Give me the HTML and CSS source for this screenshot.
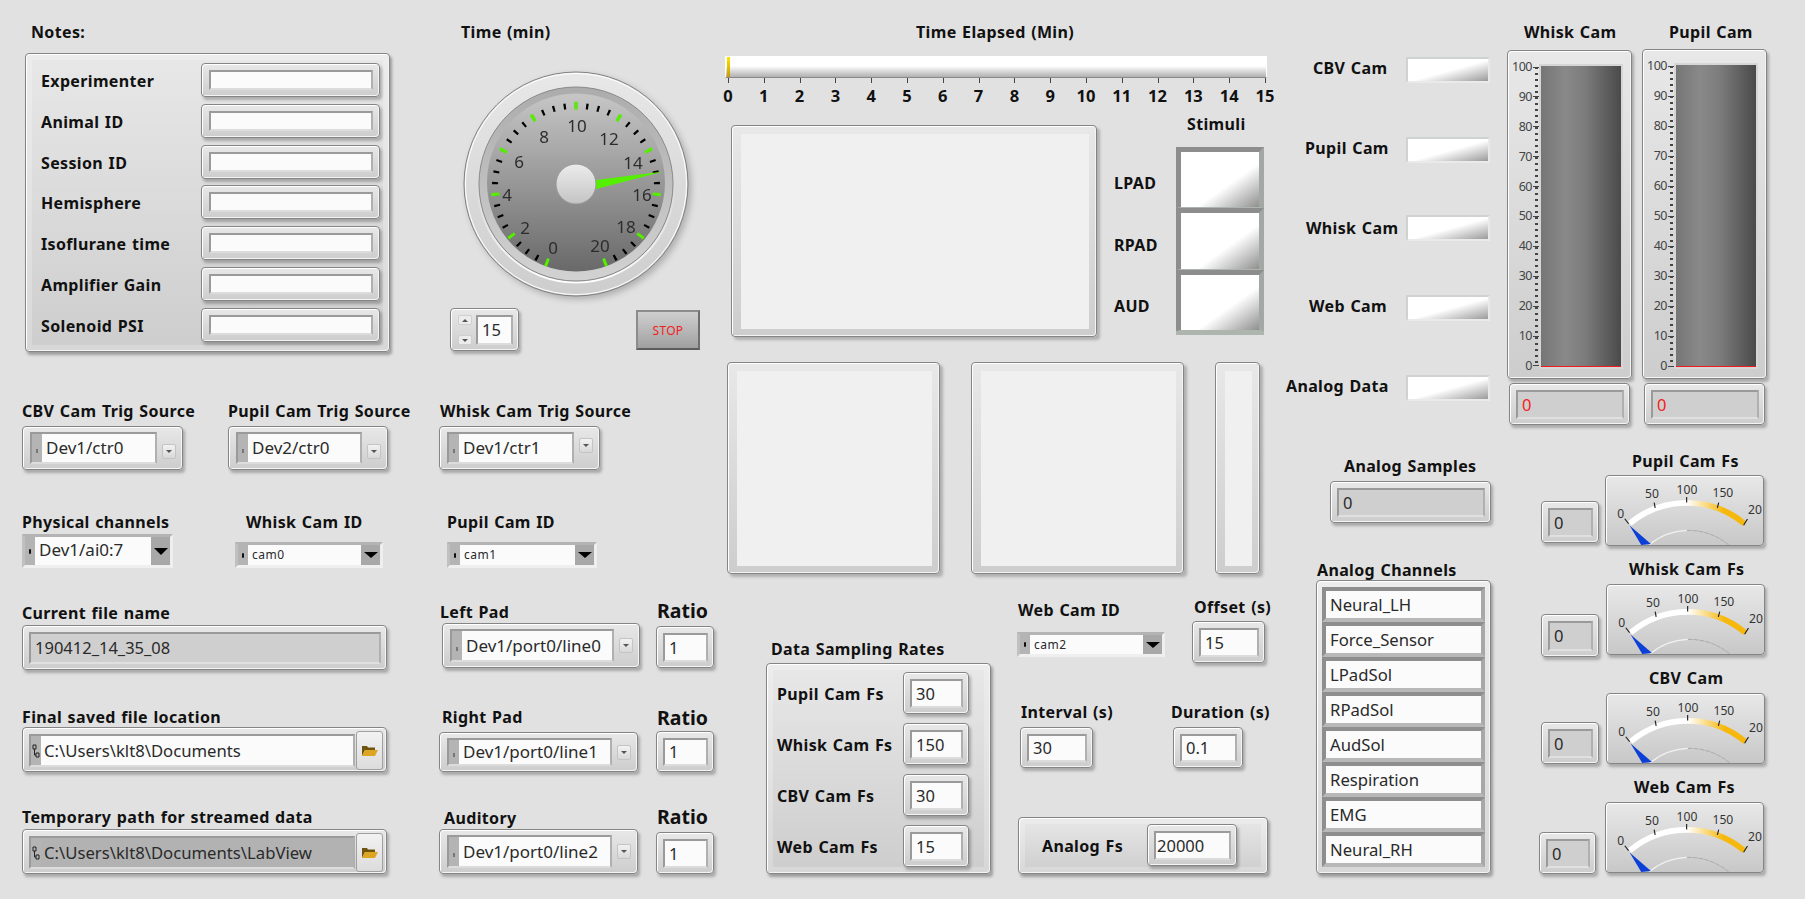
FILE: index.html
```html
<!DOCTYPE html>
<html lang="en">
<head>
<meta charset="UTF-8" />
<title>Front Panel</title>
<link rel="stylesheet" href="styles.css">
</head>
<body>
<main class="front-panel">

  <!-- Notes -->
  <div class="lbl l-notes">Notes:</div>
  <section class="cluster c-notes">
    <div class="note-row"><span class="lbl-in">Experimenter</span><div class="box field"><div class="well"></div></div></div>
    <div class="note-row"><span class="lbl-in">Animal ID</span><div class="box field"><div class="well"></div></div></div>
    <div class="note-row"><span class="lbl-in">Session ID</span><div class="box field"><div class="well"></div></div></div>
    <div class="note-row"><span class="lbl-in">Hemisphere</span><div class="box field"><div class="well"></div></div></div>
    <div class="note-row"><span class="lbl-in">Isoflurane time</span><div class="box field"><div class="well"></div></div></div>
    <div class="note-row"><span class="lbl-in">Amplifier Gain</span><div class="box field"><div class="well"></div></div></div>
    <div class="note-row"><span class="lbl-in">Solenoid PSI</span><div class="box field"><div class="well"></div></div></div>
  </section>

  <!-- Time dial -->
  <div class="lbl l-time">Time (min)</div>
  <svg class="dial" viewBox="0 0 242 242" width="242" height="242">
    <defs>
      <linearGradient id="ringOuter" x1="0" y1="0" x2="0" y2="1"><stop offset="0" stop-color="#e8e8e8"/><stop offset="1" stop-color="#cdcdcd"/></linearGradient>
      <linearGradient id="ringInner" x1="0" y1="0" x2="0" y2="1"><stop offset="0" stop-color="#acacac"/><stop offset="1" stop-color="#d2d2d2"/></linearGradient>
      <linearGradient id="face" x1="0" y1="0" x2="0" y2="1"><stop offset="0" stop-color="#c6c6c6"/><stop offset="1" stop-color="#696969"/></linearGradient>
      <linearGradient id="hub" x1="0" y1="0" x2="0" y2="1"><stop offset="0" stop-color="#ececec"/><stop offset="1" stop-color="#c4c4c4"/></linearGradient>
      <linearGradient id="edge" x1="0" y1="0" x2="0" y2="1"><stop offset="0.5" stop-color="#fff" stop-opacity="0"/><stop offset="1" stop-color="#fff"/></linearGradient>
      <linearGradient id="fsArc" gradientUnits="userSpaceOnUse" x1="23" y1="0" x2="141" y2="0"><stop offset="0.5" stop-color="#fff"/><stop offset="0.82" stop-color="#f6b80c"/></linearGradient>
    </defs>
    <circle cx="121" cy="120" r="112" fill="url(#ringOuter)" stroke="#808080"/>
    <circle cx="121" cy="120" r="110.5" fill="none" stroke="#fff"/>
    <circle cx="121" cy="120" r="98.5" fill="none" stroke="url(#edge)" stroke-width="2"/>
    <circle cx="121" cy="120" r="97" fill="url(#ringInner)" stroke="#8a8a8a"/>
    <circle cx="121" cy="118.500" r="89" fill="url(#face)"/>
    <path d="M93.400 198.900A81 81 0 1 1 148.600 198.900" pathLength="320.2" fill="none" stroke="#000" stroke-width="6" stroke-dasharray="1.6 6.35" stroke-dashoffset="-0.3"/>
    <path d="M93.400 198.900A81 81 0 1 1 148.600 198.900" pathLength="320.2" fill="none" stroke="#55f000" stroke-width="8" stroke-dasharray="2.2 29.6"/>
    <g class="dial-num">
      <text x="98" y="183">0</text><text x="70" y="163">2</text><text x="52" y="130">4</text><text x="64" y="97">6</text>
      <text x="89" y="72">8</text><text x="122" y="61">10</text><text x="154" y="74">12</text><text x="178" y="98">14</text>
      <text x="187" y="130">16</text><text x="171" y="162">18</text><text x="145" y="181">20</text>
    </g>
    <polygon points="141,116 208.5,107.5 141,125" fill="#55f000"/>
    <circle cx="121" cy="120" r="20" fill="url(#hub)" stroke="#9a9a9a"/>
  </svg>

  <div class="box spin s-time">
    <div class="spin-btns"><span class="spin-btn"><i class="tri-up"></i></span><span class="spin-btn"><i class="tri-down"></i></span></div>
    <div class="well val">15</div>
  </div>
  <button class="stop-btn">STOP</button>

  <!-- Progress -->
  <div class="lbl l-elapsed">Time Elapsed (Min)</div>
  <div class="slide"><span class="slide-fill"></span></div>
  <div class="slide-scale">
    <span>0</span><span>1</span><span>2</span><span>3</span><span>4</span><span>5</span><span>6</span><span>7</span>
    <span>8</span><span>9</span><span>10</span><span>11</span><span>12</span><span>13</span><span>14</span><span>15</span>
  </div>

  <!-- Empty image displays -->
  <div class="display d-main"><div class="display-in"></div></div>
  <div class="display d-left"><div class="display-in"></div></div>
  <div class="display d-mid"><div class="display-in"></div></div>
  <div class="display d-side"><div class="display-in"></div></div>

  <!-- Stimuli -->
  <div class="lbl l-stimuli">Stimuli</div>
  <div class="lbl l-lpad">LPAD</div>
  <div class="lbl l-rpad">RPAD</div>
  <div class="lbl l-aud">AUD</div>
  <div class="stim-stack"><span class="stim"></span><span class="stim"></span><span class="stim"></span></div>

  <!-- Cam LEDs -->
  <div class="lbl l-led1">CBV Cam</div><span class="led led1"></span>
  <div class="lbl l-led2">Pupil Cam</div><span class="led led2"></span>
  <div class="lbl l-led3">Whisk Cam</div><span class="led led3"></span>
  <div class="lbl l-led4">Web Cam</div><span class="led led4"></span>
  <div class="lbl l-led5">Analog Data</div><span class="led led5"></span>

  <!-- Level meters -->
  <div class="lbl l-m1">Whisk Cam</div>
  <div class="meter m1">
    <div class="scale"><span>100</span><span>90</span><span>80</span><span>70</span><span>60</span><span>50</span><span>40</span><span>30</span><span>20</span><span>10</span><span>0</span></div>
    <div class="column"></div>
  </div>
  <div class="box num red v-m1"><div class="well gray val">0</div></div>

  <div class="lbl l-m2">Pupil Cam</div>
  <div class="meter m2">
    <div class="scale"><span>100</span><span>90</span><span>80</span><span>70</span><span>60</span><span>50</span><span>40</span><span>30</span><span>20</span><span>10</span><span>0</span></div>
    <div class="column"></div>
  </div>
  <div class="box num red v-m2"><div class="well gray val">0</div></div>

  <!-- Trigger sources -->
  <div class="lbl l-cbv-trig">CBV Cam Trig Source</div>
  <div class="box ring r-cbv-trig"><div class="well"><span class="strip"><i></i></span><span class="val">Dev1/ctr0</span></div><span class="drop"></span></div>
  <div class="lbl l-pupil-trig">Pupil Cam Trig Source</div>
  <div class="box ring r-pupil-trig"><div class="well"><span class="strip"><i></i></span><span class="val">Dev2/ctr0</span></div><span class="drop"></span></div>
  <div class="lbl l-whisk-trig">Whisk Cam Trig Source</div>
  <div class="box ring r-whisk-trig"><div class="well"><span class="strip"><i></i></span><span class="val">Dev1/ctr1</span></div><span class="drop"></span></div>

  <!-- Channels and cam ids -->
  <div class="lbl l-phys">Physical channels</div>
  <div class="flat-ring f-phys"><span class="flat-strip"><i></i></span><span class="val">Dev1/ai0:7</span><span class="flat-arrow"></span></div>
  <div class="lbl l-whisk-id">Whisk Cam ID</div>
  <div class="flat-ring small f-whisk-id"><span class="flat-strip"><i></i></span><span class="val">cam0</span><span class="flat-arrow"></span></div>
  <div class="lbl l-pupil-id">Pupil Cam ID</div>
  <div class="flat-ring small f-pupil-id"><span class="flat-strip"><i></i></span><span class="val">cam1</span><span class="flat-arrow"></span></div>
  <div class="lbl l-web-id">Web Cam ID</div>
  <div class="flat-ring small f-web-id"><span class="flat-strip"><i></i></span><span class="val">cam2</span><span class="flat-arrow"></span></div>

  <!-- Files -->
  <div class="lbl l-file">Current file name</div>
  <div class="box num t-file"><div class="well gray val">190412_14_35_08</div></div>

  <div class="lbl l-final">Final saved file location</div>
  <div class="box path t-final">
    <div class="well"><span class="strip path-strip"><svg width="8" height="14" viewBox="0 0 8 14"><path d="M1 1h3v4H1zM4 9h3v4H4zM2.5 5v6H4" fill="none" stroke="#222"/></svg></span><span class="val">C:\Users\klt8\Documents</span></div>
    <span class="browse"><svg width="16" height="11" viewBox="0 0 16 11"><path d="M0 11V1h5l1 1.500h7V5H3z" fill="#6f5410"/><path d="M0 11l3-6h13l-3 6z" fill="#dca624"/></svg></span>
  </div>

  <div class="lbl l-temp">Temporary path for streamed data</div>
  <div class="box path t-temp">
    <div class="well dark"><span class="strip path-strip"><svg width="8" height="14" viewBox="0 0 8 14"><path d="M1 1h3v4H1zM4 9h3v4H4zM2.5 5v6H4" fill="none" stroke="#222"/></svg></span><span class="val">C:\Users\klt8\Documents\LabView</span></div>
    <span class="browse"><svg width="16" height="11" viewBox="0 0 16 11"><path d="M0 11V1h5l1 1.500h7V5H3z" fill="#6f5410"/><path d="M0 11l3-6h13l-3 6z" fill="#dca624"/></svg></span>
  </div>

  <!-- Digital lines -->
  <div class="lbl l-left">Left Pad</div>
  <div class="box ring r-left"><div class="well"><span class="strip"><i></i></span><span class="val">Dev1/port0/line0</span></div><span class="drop"></span></div>
  <div class="lbl-big l-ratio1">Ratio</div>
  <div class="box num v-ratio1"><div class="well val">1</div></div>

  <div class="lbl l-right">Right Pad</div>
  <div class="box ring r-right"><div class="well"><span class="strip"><i></i></span><span class="val">Dev1/port0/line1</span></div><span class="drop"></span></div>
  <div class="lbl-big l-ratio2">Ratio</div>
  <div class="box num v-ratio2"><div class="well val">1</div></div>

  <div class="lbl l-aud2">Auditory</div>
  <div class="box ring r-aud"><div class="well"><span class="strip"><i></i></span><span class="val">Dev1/port0/line2</span></div><span class="drop"></span></div>
  <div class="lbl-big l-ratio3">Ratio</div>
  <div class="box num v-ratio3"><div class="well val">1</div></div>

  <!-- Data sampling rates -->
  <div class="lbl l-rates">Data Sampling Rates</div>
  <section class="cluster c-rates">
    <div class="rate-row"><span class="lbl-in">Pupil Cam Fs</span><div class="box num"><div class="well val">30</div></div></div>
    <div class="rate-row"><span class="lbl-in">Whisk Cam Fs</span><div class="box num"><div class="well val">150</div></div></div>
    <div class="rate-row"><span class="lbl-in">CBV Cam Fs</span><div class="box num"><div class="well val">30</div></div></div>
    <div class="rate-row"><span class="lbl-in">Web Cam Fs</span><div class="box num"><div class="well val">15</div></div></div>
  </section>

  <div class="lbl l-offset">Offset (s)</div>
  <div class="box num v-offset"><div class="well val">15</div></div>
  <div class="lbl l-interval">Interval (s)</div>
  <div class="box num v-interval"><div class="well val">30</div></div>
  <div class="lbl l-duration">Duration (s)</div>
  <div class="box num v-duration"><div class="well val">0.1</div></div>

  <section class="cluster c-analog-fs">
    <span class="lbl-in">Analog Fs</span>
    <div class="box num"><div class="well val tight">20000</div></div>
  </section>

  <!-- Analog -->
  <div class="lbl l-samples">Analog Samples</div>
  <div class="box num v-samples"><div class="well gray val">0</div></div>

  <div class="lbl l-channels">Analog Channels</div>
  <section class="cluster c-channels">
    <div class="chan">Neural_LH</div>
    <div class="chan">Force_Sensor</div>
    <div class="chan">LPadSol</div>
    <div class="chan">RPadSol</div>
    <div class="chan">AudSol</div>
    <div class="chan">Respiration</div>
    <div class="chan">EMG</div>
    <div class="chan">Neural_RH</div>
  </section>

  <!-- Frame rate meters -->
  <div class="lbl l-fs1">Pupil Cam Fs</div>
  <div class="box num v-fs1"><div class="well gray val">0</div></div>
  <svg class="fs-gauge g-fs1" viewBox="0 0 159 71" width="159" height="71">
    <path d="M43 71A64 64 0 0 1 82 56" fill="none" stroke="#f0f0f0" stroke-width="1.200"/>
    <path d="M82 56A64 64 0 0 1 125 71" fill="none" stroke="#a8a8a8" stroke-dasharray="5 1"/>
    <path d="M23 49A92 92 0 0 1 141 49" fill="none" stroke="url(#fsArc)" stroke-width="6"/>
    <path d="M18 44l4 5M48.300 27.300l1 5.400M81.700 21.700v5.600M114.700 27.300l-1.400 5.400M144.300 44.300l-4 6.400" stroke="#222" stroke-width="1.200"/>
    <polygon points="23,51 35,71 45,70" fill="#0c3fd8"/>
    <g class="fs-num"><text x="14" y="39">0</text><text x="46" y="18">50</text><text x="82" y="14">100</text><text x="119" y="17">150</text><text x="152" y="34">20</text></g>
  </svg>

  <div class="lbl l-fs2">Whisk Cam Fs</div>
  <div class="box num v-fs2"><div class="well gray val">0</div></div>
  <svg class="fs-gauge g-fs2" viewBox="0 0 159 71" width="159" height="71">
    <path d="M43 71A64 64 0 0 1 82 56" fill="none" stroke="#f0f0f0" stroke-width="1.200"/>
    <path d="M82 56A64 64 0 0 1 125 71" fill="none" stroke="#a8a8a8" stroke-dasharray="5 1"/>
    <path d="M23 49A92 92 0 0 1 141 49" fill="none" stroke="url(#fsArc)" stroke-width="6"/>
    <path d="M18 44l4 5M48.300 27.300l1 5.400M81.700 21.700v5.600M114.700 27.300l-1.400 5.400M144.300 44.300l-4 6.400" stroke="#222" stroke-width="1.200"/>
    <polygon points="23,51 35,71 45,70" fill="#0c3fd8"/>
    <g class="fs-num"><text x="14" y="39">0</text><text x="46" y="18">50</text><text x="82" y="14">100</text><text x="119" y="17">150</text><text x="152" y="34">20</text></g>
  </svg>

  <div class="lbl l-fs3">CBV Cam</div>
  <div class="box num v-fs3"><div class="well gray val">0</div></div>
  <svg class="fs-gauge g-fs3" viewBox="0 0 159 71" width="159" height="71">
    <path d="M43 71A64 64 0 0 1 82 56" fill="none" stroke="#f0f0f0" stroke-width="1.200"/>
    <path d="M82 56A64 64 0 0 1 125 71" fill="none" stroke="#a8a8a8" stroke-dasharray="5 1"/>
    <path d="M23 49A92 92 0 0 1 141 49" fill="none" stroke="url(#fsArc)" stroke-width="6"/>
    <path d="M18 44l4 5M48.300 27.300l1 5.400M81.700 21.700v5.600M114.700 27.300l-1.400 5.400M144.300 44.300l-4 6.400" stroke="#222" stroke-width="1.200"/>
    <polygon points="23,51 35,71 45,70" fill="#0c3fd8"/>
    <g class="fs-num"><text x="14" y="39">0</text><text x="46" y="18">50</text><text x="82" y="14">100</text><text x="119" y="17">150</text><text x="152" y="34">20</text></g>
  </svg>

  <div class="lbl l-fs4">Web Cam Fs</div>
  <div class="box num v-fs4"><div class="well gray val">0</div></div>
  <svg class="fs-gauge g-fs4" viewBox="0 0 159 71" width="159" height="71">
    <path d="M43 71A64 64 0 0 1 82 56" fill="none" stroke="#f0f0f0" stroke-width="1.200"/>
    <path d="M82 56A64 64 0 0 1 125 71" fill="none" stroke="#a8a8a8" stroke-dasharray="5 1"/>
    <path d="M23 49A92 92 0 0 1 141 49" fill="none" stroke="url(#fsArc)" stroke-width="6"/>
    <path d="M18 44l4 5M48.300 27.300l1 5.400M81.700 21.700v5.600M114.700 27.300l-1.400 5.400M144.300 44.300l-4 6.400" stroke="#222" stroke-width="1.200"/>
    <polygon points="23,51 35,71 45,70" fill="#0c3fd8"/>
    <g class="fs-num"><text x="14" y="39">0</text><text x="46" y="18">50</text><text x="82" y="14">100</text><text x="119" y="17">150</text><text x="152" y="34">20</text></g>
  </svg>

</main>
</body>
</html>
```
FILE: styles.css
```css
/* Page: a free canvas, controls sit where they were dropped on the panel */
* { box-sizing: border-box; }

body, html {
  margin: 0;
  padding: 0;
  background: #e1e1e1;
  overflow: hidden;
  font-family: "Noto Sans", "Open Sans", sans-serif;
}

.front-panel {
  position: relative;
  width: 1805px;
  height: 899px;
}

.front-panel > * { position: absolute; }

/* Labels */
.lbl, .lbl-big, .lbl-in {
  font-weight: 700;
  color: #111;
  white-space: nowrap;
  line-height: 20px;
}
.lbl, .lbl-in { font-size: 16px; letter-spacing: .35px; word-spacing: 1px; }
.lbl-in { padding-top: 2px; }
.lbl-big { font-size: 19.500px; line-height: 24px; }

/* Raised frame around controls */
.box, .cluster, .display, .meter {
  border: 1px solid #858585;
  border-radius: 4px;
  background: linear-gradient(#e8e8e8, #cdcdcd);
  box-shadow: inset 1px 1px 0 #fff, inset -1px -1px 0 #f4f4f4, 2px 3px 3px rgba(0,0,0,.25);
}

/* Sunken part of a control */
.well {
  flex: 1;
  display: flex;
  align-items: center;
  background: #fbfbfb;
  border: 2px solid #9a9a9a;
  border-bottom-color: #dcdcdc;
  border-right-color: #b0b0b0;
}
.well.gray { background: #cfcfcf; border-bottom-color: #e0e0e0; }
.well.dark { background: #b2b2b2; border-bottom-color: #dcdcdc; }

.val {
  font-size: 16.500px;
  line-height: 20px;
  color: #2a2a2a;
  white-space: nowrap;
}

/* Notes cluster */
.cluster { box-shadow: inset 1px 1px 0 #fff, inset -1px -1px 0 #f4f4f4, inset 0 0 0 6px rgba(255,255,255,.22), 2px 3px 3px rgba(0,0,0,.3); }
.c-notes {
  left: 25px; top: 53px; width: 365px; height: 299px;
  padding: 9px 9px 10px 15px;
  display: flex;
  flex-direction: column;
  gap: 6.800px;
}
.note-row { display: grid; grid-template-columns: 1fr 179px; align-items: center; height: 34px; }
.field { display: flex; height: 34px; padding: 6px 6px 6px 7px; }

/* Numeric and string controls */
.num { display: flex; padding: 6px 5px 5px 6px; }
.well.val { padding-left: 4px; }
.well.tight { padding-left: 1px; }
.red .val { color: #f21e1e; }

/* Dropdown with small button */
.ring { display: flex; align-items: stretch; gap: 5px; padding: 5px 6px 5px 7px; }
.ring .val { font-size: 17px; }
.strip {
  flex: none;
  width: 10px;
  align-self: stretch;
  background: #b4b4b4;
  margin-right: 4px;
  display: flex;
  align-items: center;
  justify-content: center;
}
.strip i { width: 2px; height: 4px; background: #777; margin-top: 6px; }
.drop {
  flex: none;
  align-self: center;
  width: 14px;
  height: 15px;
  margin-top: 6px;
  border: 1px solid #c4c4c4;
  border-radius: 2px;
  background: linear-gradient(#f2f2f2, #d8d8d8);
  display: flex;
  align-items: center;
  justify-content: center;
}
.drop::after {
  content: "";
  border: 3px solid transparent;
  border-top: 3px solid #555;
  border-bottom: 0;
}

/* Flat dropdown */
.flat-ring {
  display: flex;
  align-items: stretch;
  background: #fbfbfb;
  border: 3px solid;
  border-color: #b4b4b4 #efefef #efefef #c0c0c0;
}
.flat-ring .val { flex: 1; padding: 0 4px; line-height: 26px; font-size: 17px; }
.flat-strip {
  width: 10px;
  background: #b4b4b4;
  display: flex;
  align-items: center;
  justify-content: center;
}
.flat-strip i { width: 2px; height: 5px; background: #111; border-radius: 1px; }
.flat-arrow {
  width: 19px;
  background: #a8a8a8;
  display: flex;
  align-items: center;
  justify-content: center;
}
.flat-arrow::after {
  content: "";
  border: 7px solid transparent;
  border-top: 7px solid #000;
  border-bottom: 0;
}
.flat-ring.small .val { font-size: 12px; line-height: 20px; letter-spacing: .5px; padding: 0 4px; }
.flat-ring.small .flat-arrow::after { border-width: 6px 7px 0; }

/* Path controls */
.path { display: flex; align-items: stretch; padding: 6px 3px 4px 6px; gap: 1px; }
.path .well { padding: 0; }
.path .strip { margin-right: 3px; }
.path .val { font-size: 16.700px; }
.browse {
  flex: none;
  width: 27px;
  margin: -3px 0;
  border: 1px solid #a0a0a0;
  border-radius: 3px;
  background: linear-gradient(#f2f2f2, #dcdcdc);
  display: flex;
  align-items: center;
  justify-content: center;
}

/* Dial */
.dial { left: 455px; top: 64px; filter: drop-shadow(3px 3px 3px rgba(0,0,0,.22)); }
.dial-num text {
  font-size: 17px;
  fill: #2c2c2c;
  text-anchor: middle;
  dominant-baseline: central;
}

/* Spinner */
.spin { display: flex; gap: 4px; padding: 6px 5px 5px 7px; }
.s-time { left: 450px; top: 308px; width: 69px; height: 43px; }
.spin-btns { display: flex; flex-direction: column; justify-content: space-between; width: 14px; }
.spin-btn {
  height: 10px;
  background: #ececec;
  border: 1px solid #cfcfcf;
  border-radius: 2px;
  display: flex;
  align-items: center;
  justify-content: center;
}
.tri-up, .tri-down { border: 3px solid transparent; }
.tri-up { border-bottom: 3px solid #555; border-top: 0; }
.tri-down { border-top: 3px solid #555; border-bottom: 0; }
.spin .well { padding-left: 4px; }

.stop-btn {
  left: 636px; top: 310px; width: 64px; height: 40px;
  padding: 0;
  border: 2px solid;
  border-color: #8c8c8c #6e6e6e #5c5c5c #8c8c8c;
  background: linear-gradient(#cfcfcf, #a0a0a0);
  color: #f21e1e;
  font: 12px "Noto Sans", sans-serif;
  letter-spacing: .3px;
}

/* Elapsed slide */
.slide {
  left: 725px; top: 56px; width: 542px; height: 22px;
  border: 1px solid #fff;
  border-bottom: 1px solid #8a8a8a;
  background: linear-gradient(#fff 45%, #b0b0b0 100%);
}
.slide-fill {
  display: block;
  width: 3px;
  height: 100%;
  margin-left: 1px;
  background: linear-gradient(#ffe600, #c89a00);
}
.slide-scale {
  left: 712px; top: 78px; width: 569px;
  display: flex;
  justify-content: space-between;
}
.slide-scale span {
  position: relative;
  flex: none;
  width: 32px;
  padding-top: 7px;
  text-align: center;
  font-size: 16.500px;
  font-weight: 700;
  line-height: 22px;
  color: #111;
}
.slide-scale span::before {
  content: "";
  position: absolute;
  left: 50%;
  top: 0;
  width: 1px;
  height: 5px;
  background: #444;
}

/* Image displays */
.display { padding: 8px 7px 7px 9px; display: flex; box-shadow: inset 1px 1px 0 #fff, inset -1px -1px 0 #f4f4f4, 3px 3px 3px rgba(0,0,0,.22); }
.display-in { flex: 1; background: #f0f0f0; }
.d-main { left: 731px; top: 125px; width: 366px; height: 212px; }
.d-left { left: 727px; top: 362px; width: 213px; height: 212px; }
.d-mid { left: 971px; top: 362px; width: 213px; height: 212px; }
.d-side { left: 1215px; top: 362px; width: 45px; height: 212px; }

/* Stimuli lamps */
.stim-stack {
  left: 1176px; top: 147px; width: 88px; height: 188px;
  display: grid;
  grid-template-rows: repeat(3, 1fr);
  border-bottom: 4px solid #aeb4ae;
}
.stim {
  border-style: solid;
  border-width: 5px 5px 1px;
  border-color: #8d8d8d #a4a8a4 #aeb4ae #8d8d8d;
  background: linear-gradient(to bottom right, #fff 60%, #8f8f8f 100%);
}
.led {
  width: 84px; height: 26px;
  border: 2px solid;
  border-color: #cfd3cf #eaeaea #eaeaea #cfd3cf;
  background: linear-gradient(to bottom right, #fff 52%, #9a9a9a 100%);
}

/* Level meters */
.meter { display: flex; padding: 15px 10px 11px 0; }
.scale {
  position: relative;
  width: 33px;
  margin: -5px 0;
  display: flex;
  flex-direction: column;
  justify-content: space-between;
  align-items: flex-end;
  padding-right: 2px;
}
.scale::before {
  content: "";
  position: absolute;
  right: 3px;
  top: 6px;
  bottom: 6px;
  width: 3px;
  background: repeating-linear-gradient(#444 0 2px, transparent 2px 6px);
}
.scale span {
  display: flex;
  align-items: center;
  gap: 1px;
  font-size: 12.500px;
  line-height: 12px;
  letter-spacing: -.5px;
  color: #444;
}
.scale span::after {
  content: "";
  width: 6px;
  height: 1px;
  background: #444;
}
.column {
  flex: 1;
  border-bottom: 1px solid #f01c1c;
  outline: 2px solid #d6d6d6;
  background: linear-gradient(90deg, #767676, #898989 30%, #7c7c7c 55%, #4a4a4a);
}

/* Channel list */
.c-channels { left: 1316px; top: 580px; width: 175px; height: 294px; padding: 6px 5px; display: flex; flex-direction: column; }
.chan {
  height: 35px;
  padding-left: 4px;
  font-size: 16.700px;
  line-height: 27px;
  color: #2a2a2a;
  background: #fbfbfb;
  border: 4px solid;
  border-color: #8e8e8e #a8a8a8 #b8b8b8 #8e8e8e;
}

/* Rates cluster */
.c-rates { left: 766px; top: 663px; width: 225px; height: 211px; padding: 8px 21px 6px 10px; display: flex; flex-direction: column; gap: 9px; }
.rate-row { display: grid; grid-template-columns: 1fr 66px; align-items: center; height: 42px; }
.rate-row .box { height: 42px; }

.c-analog-fs { left: 1018px; top: 817px; width: 250px; height: 57px; padding: 6px 30px 7px 23px; display: flex; align-items: center; justify-content: space-between; }
.c-analog-fs .box { width: 90px; height: 42px; }

/* Frame rate gauges */
.fs-gauge {
  border: 1px solid #858585;
  border-radius: 4px;
  background: linear-gradient(#e8e8e8, #c8c8c8);
  box-shadow: inset 1px 1px 0 #fff, 2px 3px 3px rgba(0,0,0,.25);
  overflow: hidden;
}
.fs-num text {
  font-size: 12.500px;
  fill: #333;
  text-anchor: middle;
  dominant-baseline: central;
}

/* Places on the panel: labels */
.l-notes { left: 31px; top: 22px; }
.l-time { left: 461px; top: 22px; }
.l-elapsed { left: 916px; top: 22px; }
.l-stimuli { left: 1187px; top: 114px; }
.l-lpad { left: 1114px; top: 173px; }
.l-rpad { left: 1114px; top: 235px; }
.l-aud { left: 1114px; top: 296px; }
.l-led1 { left: 1313px; top: 58px; }
.l-led2 { left: 1305px; top: 138px; }
.l-led3 { left: 1306px; top: 218px; }
.l-led4 { left: 1309px; top: 296px; }
.l-led5 { left: 1286px; top: 376px; }
.l-m1 { left: 1524px; top: 22px; }
.l-m2 { left: 1669px; top: 22px; }
.l-cbv-trig { left: 22px; top: 401px; }
.l-pupil-trig { left: 228px; top: 401px; }
.l-whisk-trig { left: 440px; top: 401px; }
.l-phys { left: 22px; top: 512px; }
.l-whisk-id { left: 246px; top: 512px; }
.l-pupil-id { left: 447px; top: 512px; }
.l-web-id { left: 1018px; top: 600px; }
.l-file { left: 22px; top: 603px; }
.l-final { left: 22px; top: 707px; }
.l-temp { left: 22px; top: 807px; }
.l-left { left: 440px; top: 602px; }
.l-right { left: 442px; top: 707px; }
.l-aud2 { left: 444px; top: 808px; }
.l-ratio1 { left: 657px; top: 599px; }
.l-ratio2 { left: 657px; top: 706px; }
.l-ratio3 { left: 657px; top: 805px; }
.l-rates { left: 771px; top: 639px; }
.l-offset { left: 1194px; top: 597px; }
.l-interval { left: 1021px; top: 702px; }
.l-duration { left: 1171px; top: 702px; }
.l-samples { left: 1344px; top: 456px; }
.l-channels { left: 1317px; top: 560px; }
.l-fs1 { left: 1632px; top: 451px; }
.l-fs2 { left: 1629px; top: 559px; }
.l-fs3 { left: 1649px; top: 668px; }
.l-fs4 { left: 1634px; top: 777px; }

/* Places on the panel: controls */
.led1 { left: 1406px; top: 57px; }
.led2 { left: 1406px; top: 137px; }
.led3 { left: 1406px; top: 215px; }
.led4 { left: 1406px; top: 295px; }
.led5 { left: 1406px; top: 375px; }
.m1 { left: 1507px; top: 50px; width: 125px; height: 329px; }
.m2 { left: 1642px; top: 49px; width: 125px; height: 330px; }
.v-m1 { left: 1509px; top: 383px; width: 121px; height: 42px; }
.v-m2 { left: 1644px; top: 383px; width: 121px; height: 42px; }
.r-cbv-trig { left: 22px; top: 426px; width: 161px; height: 44px; }
.r-pupil-trig { left: 228px; top: 426px; width: 160px; height: 44px; }
.r-whisk-trig { left: 439px; top: 426px; width: 161px; height: 44px; }
.r-whisk-trig .drop { margin-top: -6px; }
.f-phys { left: 22px; top: 534px; width: 151px; height: 34px; }
.f-whisk-id { left: 235px; top: 542px; width: 148px; height: 26px; }
.f-pupil-id { left: 447px; top: 542px; width: 150px; height: 26px; }
.f-web-id { left: 1017px; top: 632px; width: 148px; height: 25px; }
.t-file { left: 22px; top: 625px; width: 365px; height: 45px; }
.t-final { left: 22px; top: 727px; width: 365px; height: 45px; }
.t-temp { left: 22px; top: 829px; width: 365px; height: 45px; }
.r-left { left: 442px; top: 623px; width: 198px; height: 45px; }
.r-left .drop { margin-top: 0; }
.r-right { left: 439px; top: 732px; width: 199px; height: 40px; }
.r-right .drop { margin-top: 0; }
.r-aud { left: 439px; top: 829px; width: 199px; height: 45px; }
.r-aud .drop { margin-top: 0; }
.v-ratio1 { left: 656px; top: 626px; width: 58px; height: 42px; }
.v-ratio2 { left: 656px; top: 731px; width: 58px; height: 41px; }
.v-ratio3 { left: 656px; top: 832px; width: 58px; height: 42px; }
.v-offset { left: 1192px; top: 621px; width: 73px; height: 42px; }
.v-interval { left: 1020px; top: 727px; width: 73px; height: 41px; }
.v-duration { left: 1173px; top: 727px; width: 70px; height: 41px; }
.v-samples { left: 1330px; top: 481px; width: 161px; height: 42px; }
.v-fs1 { left: 1541px; top: 501px; width: 58px; height: 42px; }
.v-fs2 { left: 1541px; top: 614px; width: 58px; height: 43px; }
.v-fs3 { left: 1541px; top: 722px; width: 58px; height: 42px; }
.v-fs4 { left: 1539px; top: 832px; width: 57px; height: 42px; }
.g-fs1 { left: 1605px; top: 475px; }
.g-fs2 { left: 1606px; top: 584px; }
.g-fs3 { left: 1606px; top: 693px; }
.g-fs4 { left: 1605px; top: 802px; }
```
